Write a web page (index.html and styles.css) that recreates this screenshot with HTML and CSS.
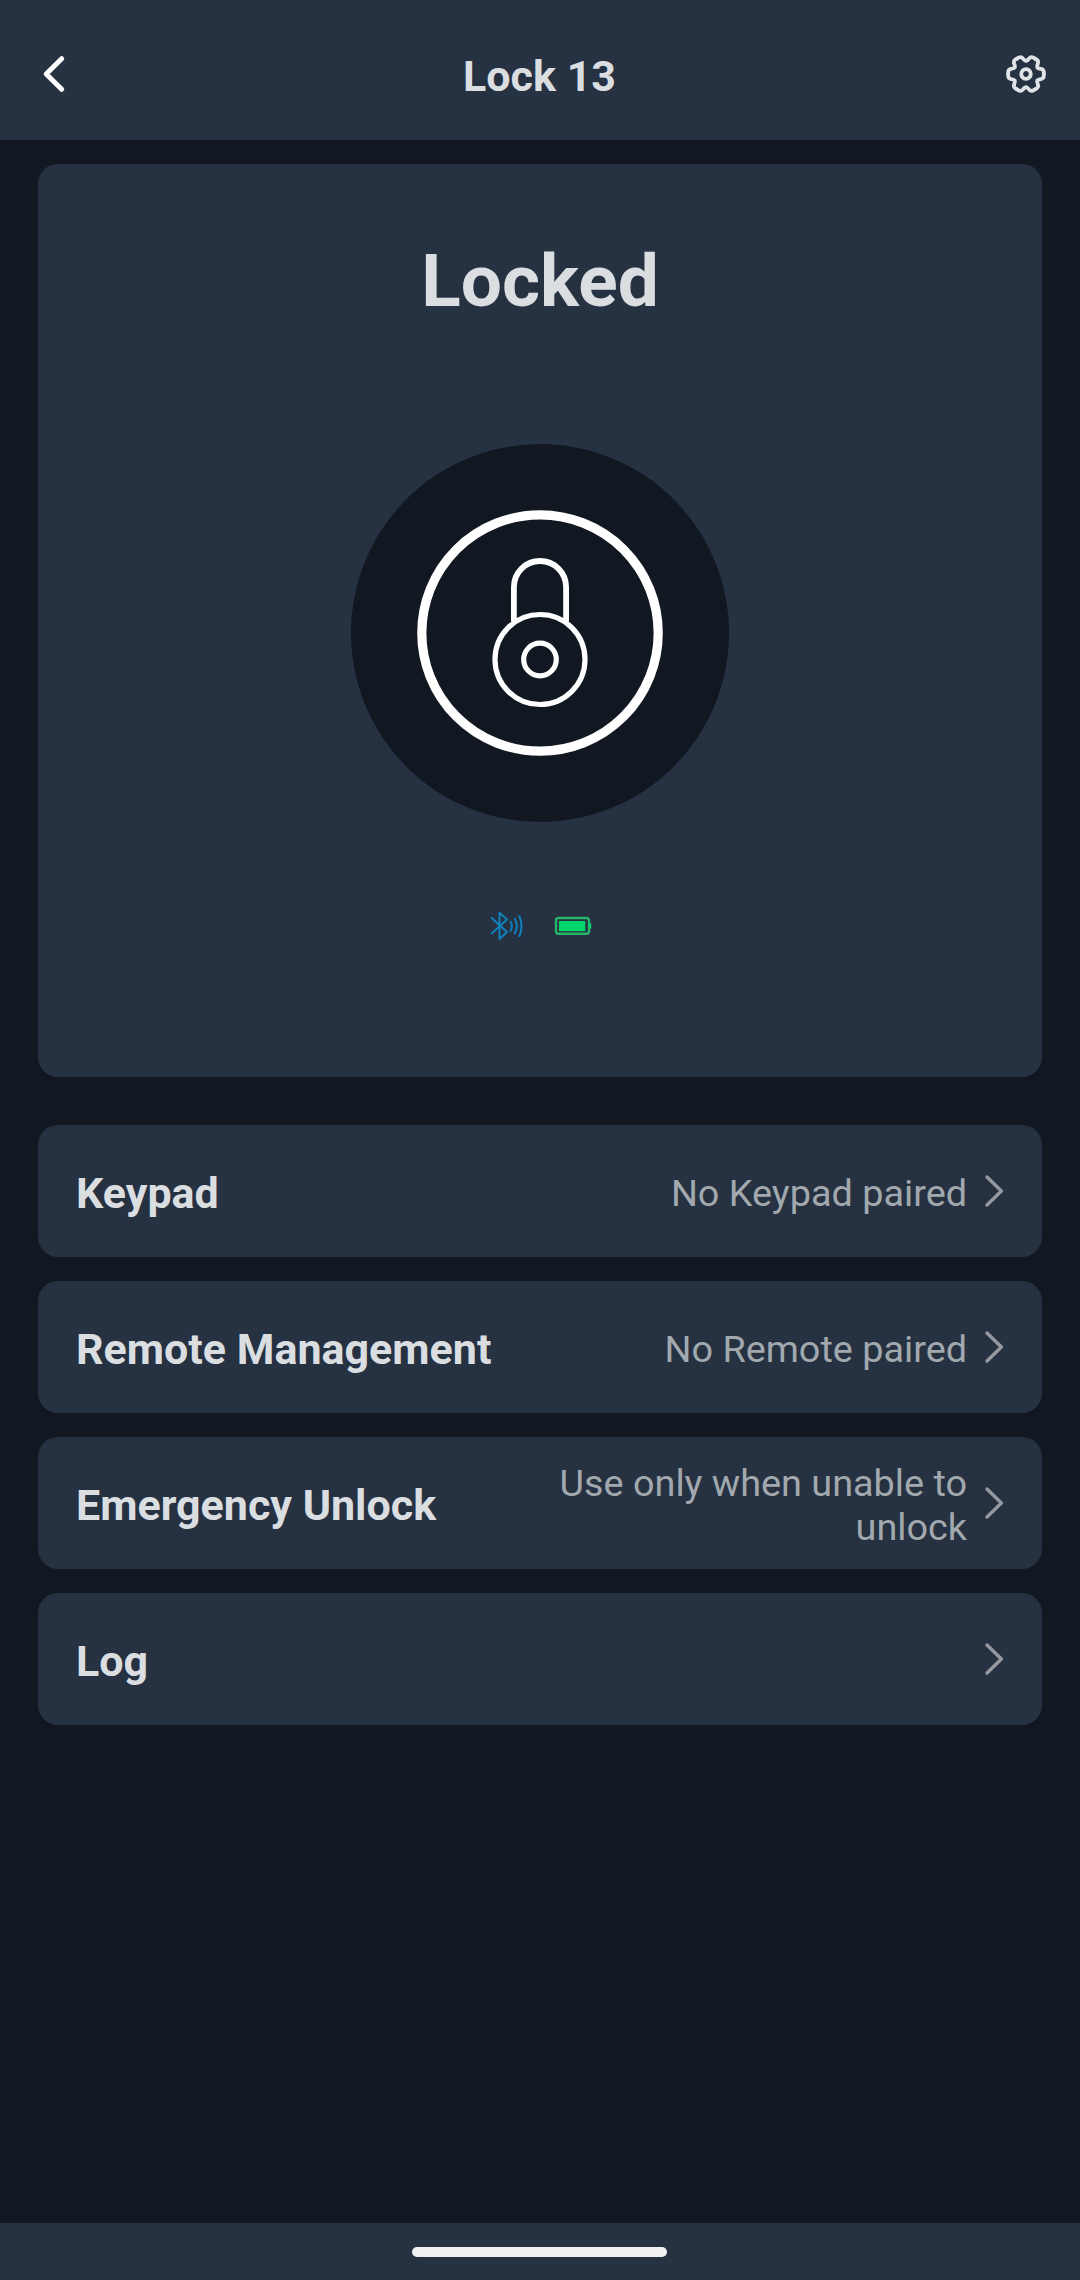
FILE: index.html
```html
<!DOCTYPE html>
<html lang="en">
<head>
<meta charset="utf-8">
<title>Lock 13</title>
<link rel="stylesheet" href="styles.css">
</head>
<body>
<div class="screen">
  <header class="topbar">
    <svg class="back" viewBox="0 0 40 40"><path d="M23.7 4.7 8.2 20 23.7 35.3"/></svg>
    <h1 class="title">Lock 13</h1>
    <svg class="gear" viewBox="-22 -22 44 44">
      <defs><path id="tooth" d="M17.8 0V1.8Q17.8 4.6 14.8 5.1 12.1 5.6 11.26 6.5 10.7 8 11.82 10.27 12.9 13.1 10.46 14.52L8.9 15.4"/></defs>
      <use href="#tooth"/><use href="#tooth" transform="rotate(60)"/><use href="#tooth" transform="rotate(120)"/>
      <use href="#tooth" transform="rotate(180)"/><use href="#tooth" transform="rotate(240)"/><use href="#tooth" transform="rotate(300)"/>
      <circle r="4.8"/>
    </svg>
  </header>
  <main class="content">
    <section class="status">
      <h2 class="state">Locked</h2>
      <div class="dial">
        <svg class="lock" viewBox="351 444 378 378">
          <circle class="ring" cx="540" cy="633" r="118.2"/>
          <path class="shackle" d="M513.9 621.5V587a26.1 26 0 0 1 52.2 0V621.5"/>
          <circle class="body" cx="540" cy="659.5" r="45"/>
          <circle class="body" cx="540" cy="659.5" r="16.3"/>
        </svg>
      </div>
      <div class="indicators">
        <svg class="bluetooth" viewBox="10 10 34 32">
          <path d="M11.7 18 27 32 19.5 39V12.7L27 19.5 11.7 33.5"/>
          <path d="M30.6 21.7q2.6 4.5 0 9M34.8 18.8q4.2 7.2 0 14.6M39.4 16.2q4.2 10 0 19.8"/>
        </svg>
        <svg class="battery" viewBox="74 16 38 20">
          <rect class="shell" x="76" y="18" width="33" height="15.8" rx="2.6"/>
          <rect class="charge" x="79" y="21" width="26.3" height="10.2"/>
          <rect class="charge" x="109.4" y="23.3" width="1.8" height="5.4"/>
        </svg>
      </div>
    </section>
    <nav class="menu">
      <div class="row"><span class="label">Keypad</span><span class="value">No Keypad paired</span><svg class="chevron" viewBox="0 0 20 34"><path d="M3 3 17.4 17 3 31"/></svg></div>
      <div class="row"><span class="label">Remote Management</span><span class="value">No Remote paired</span><svg class="chevron" viewBox="0 0 20 34"><path d="M3 3 17.4 17 3 31"/></svg></div>
      <div class="row"><span class="label">Emergency Unlock</span><span class="value">Use only when unable to unlock</span><svg class="chevron" viewBox="0 0 20 34"><path d="M3 3 17.4 17 3 31"/></svg></div>
      <div class="row"><span class="label">Log</span><span class="value"></span><svg class="chevron" viewBox="0 0 20 34"><path d="M3 3 17.4 17 3 31"/></svg></div>
    </nav>
  </main>
  <footer class="homebar"><div class="pill"></div></footer>
</div>
</body>
</html>
```
FILE: styles.css
```css
* { box-sizing: border-box; margin: 0; }
body { background: #111822; color: #dadee1; font-family: Roboto, "Liberation Sans", sans-serif; }
svg { display: block; flex: none; fill: none; stroke-linecap: round; stroke-linejoin: round; }

.screen { display: flex; flex-direction: column; width: 1080px; height: 2280px; }
.topbar { display: flex; align-items: center; justify-content: space-between; height: 140px; padding: 8px 32px 0 38px; background: #263141; }
.title { font-size: 43px; line-height: 50px; font-weight: 700; padding: 4px 3px 0 0; }
.back { width: 40px; height: 40px; stroke: #fff; stroke-width: 5; }
.gear { width: 44px; height: 44px; stroke: #dfe3e6; stroke-width: 3.8; }

.content { flex: 1; display: flex; flex-direction: column; gap: 48px; padding: 24px 38px 0; }
.status { display: flex; flex-direction: column; align-items: center; height: 913px; padding-top: 73px; border-radius: 20px; background: #263141; }
.state { font-size: 73px; line-height: 88px; font-weight: 700; }
.dial { margin-top: 119px; width: 378px; height: 378px; border-radius: 50%; background: #111822; }
.lock { width: 378px; height: 378px; stroke: #fff; }
.ring { stroke-width: 9.2; }
.shackle { stroke-width: 5.8; stroke-linecap: butt; }
.body { stroke-width: 5.2; }
.indicators { display: flex; gap: 30px; margin-top: 88px; padding-left: 2px; }
.bluetooth { width: 34px; height: 32px; stroke: #0f80bd; stroke-width: 2; }
.battery { width: 38px; height: 20px; margin-top: 6px; }
.shell { stroke: #25b56b; stroke-width: 2.4; }
.charge { fill: #00d66b; }

.menu { display: flex; flex-direction: column; gap: 24px; }
.row { display: flex; align-items: center; height: 132px; padding: 0 38px; border-radius: 20px; background: #263141; }
.label { font-size: 43px; line-height: 50px; font-weight: 700; padding-top: 4px; }
.value { flex: 1; padding: 4px 0 0 100px; font-size: 37.8px; line-height: 44px; text-align: right; color: #a2a9ae; }
.chevron { width: 20px; height: 34px; margin-left: 17px; stroke: #96989f; stroke-width: 3.4; }

.homebar { display: flex; justify-content: center; height: 57px; padding: 24px 1px 0 0; background: #263141; }
.pill { width: 255px; height: 9.6px; border-radius: 5px; background: #f0f0f2; }
```
